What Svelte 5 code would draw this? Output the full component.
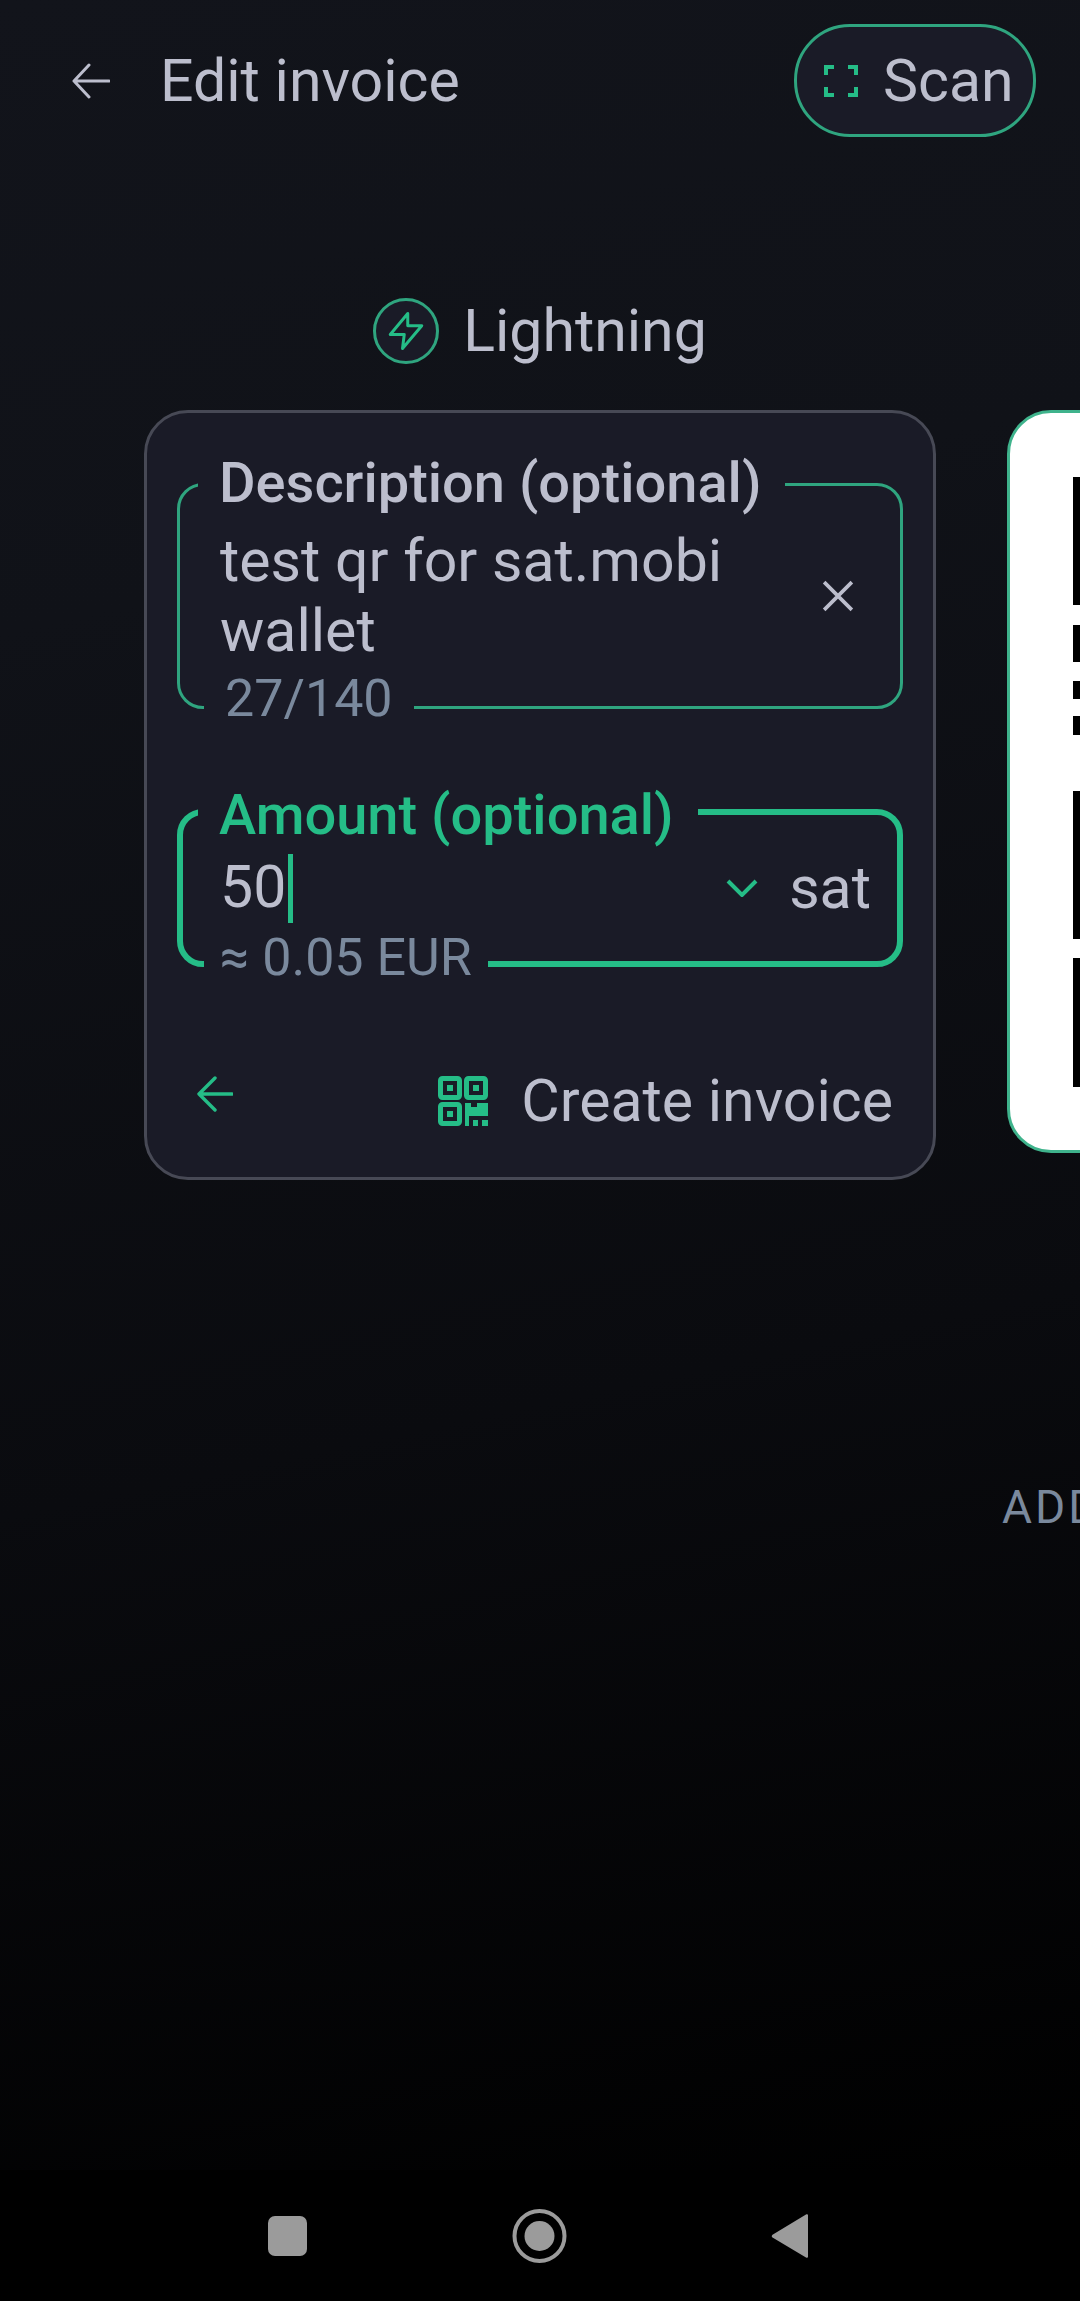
<script>
	// black stripes of the QR code that peek in at the right edge
	const qrBars = [
		{ top: 64, height: 128 },
		{ top: 20, height: 37 },
		{ top: 19, height: 18 },
		{ top: 17, height: 19 },
		{ top: 56, height: 148 },
		{ top: 19, height: 129 }
	];
</script>

<div class="screen">
	<header class="topbar">
		<div class="title">
			<svg class="back" viewBox="0 0 38 36" fill="none" stroke="currentColor" stroke-width="3" stroke-linecap="round" stroke-linejoin="round">
				<path d="M37 18H2M17 2 2 18l15 16" />
			</svg>
			<span>Edit invoice</span>
		</div>
		<button class="scan">
			<svg viewBox="0 0 34 32" fill="none" stroke="currentColor" stroke-width="4">
				<path d="M2 10V2h8M24 2h8v8M32 22v8h-8M10 30H2v-8" />
			</svg>
			<span>Scan</span>
		</button>
	</header>

	<div class="network">
		<span class="bolt">
			<svg viewBox="0 0 24 24" fill="none" stroke="currentColor" stroke-width="1.700" stroke-linejoin="round">
				<path d="M13 2 3 14h8l-1 8 11-13h-8z" />
			</svg>
		</span>
		<span>Lightning</span>
	</div>

	<main class="carousel">
		<section class="card">
			<div class="field">
				<span class="legend">Description (optional)</span>
				<div class="value">
					<p>test qr for sat.mobi<br />wallet</p>
					<svg class="clear" viewBox="0 0 30 30" fill="none" stroke="currentColor" stroke-width="3.4">
						<path d="M2 2l26 26M28 2 2 28" />
					</svg>
				</div>
				<span class="hint">27/140</span>
			</div>

			<div class="field active">
				<span class="legend">Amount (optional)</span>
				<div class="value amount">
					<p>50<i class="caret"></i></p>
					<svg class="chevron" viewBox="0 0 32 18" fill="none" stroke="currentColor" stroke-width="4">
						<path d="M2 2l14 14L30 2" />
					</svg>
					<span class="unit">sat</span>
				</div>
				<span class="hint">≈ 0.05 EUR</span>
			</div>

			<div class="actions">
				<svg class="back-green" viewBox="0 0 36 36" fill="none" stroke="currentColor" stroke-width="3.4" stroke-linecap="round" stroke-linejoin="round">
					<path d="M35 18H2M18 2 2 18l16 16" />
				</svg>
				<div class="create">
					<svg viewBox="0 0 50 50" fill="none" stroke="currentColor" stroke-width="5">
						<rect x="2.500" y="2.500" width="19" height="19" rx="2" />
						<rect x="28.500" y="2.500" width="19" height="19" rx="2" />
						<rect x="2.500" y="28.500" width="19" height="19" rx="2" />
						<g fill="currentColor" stroke="none">
							<rect x="9" y="9" width="6" height="6" />
							<rect x="35" y="9" width="6" height="6" />
							<rect x="9" y="35" width="6" height="6" />
							<path d="M27 27h6v4h6v-4h11v13H31v10h-4z" />
							<rect x="35" y="44" width="5" height="6" />
							<rect x="44" y="44" width="6" height="6" />
						</g>
					</svg>
					<span>Create invoice</span>
				</div>
			</div>
		</section>

		<section class="side">
			<div class="qr">
				{#each qrBars as bar}
					<i style="margin-top: {bar.top}px; height: {bar.height}px"></i>
				{/each}
			</div>
			<span class="add">ADD</span>
		</section>
	</main>

	<nav class="navbar">
		<svg viewBox="0 0 540 46" fill="#9b9b9b">
			<rect x="0" y="3" width="39" height="40" rx="7" />
			<circle cx="271.500" cy="23" r="25" fill="none" stroke="#9b9b9b" stroke-width="4" />
			<circle cx="271.500" cy="23" r="15" />
			<path d="M538 1.500c1-.7 2-.2 2 1v41c0 1.200-1 1.700-2 1L504.500 24.500c-1-.8-1-2 0-2.800z" />
		</svg>
	</nav>
</div>

<style>
	:global(body) {
		margin: 0;
		background: #000;
	}

	.screen {
		width: 1080px;
		height: 2301px;
		overflow: hidden;
		display: flex;
		flex-direction: column;
		background: linear-gradient(168deg, #12141b 0%, #101218 25%, #0a0b0f 60%, #000 95%);
		color: #bcbecd;
		font-family: Roboto, "Noto Sans", sans-serif;
		font-size: 59px;
	}

	.topbar {
		display: flex;
		justify-content: space-between;
		align-items: center;
		padding: 24px 44px 0 72px;
	}

	.title {
		display: flex;
		align-items: center;
		gap: 50px;
	}

	.back {
		width: 38px;
		height: 36px;
	}

	.scan {
		display: flex;
		align-items: center;
		gap: 25px;
		box-sizing: border-box;
		width: 242px;
		height: 113px;
		padding: 0 0 0 27px;
		background: #1a1b27;
		border: 3px solid #2fa57f;
		border-radius: 56px;
		color: inherit;
		font: inherit;
	}

	.scan svg {
		width: 34px;
		height: 32px;
		color: #25bd87;
	}

	.network {
		display: flex;
		justify-content: center;
		align-items: center;
		gap: 24px;
		height: 65px;
		margin-top: 161px;
	}

	.bolt {
		display: flex;
		align-items: center;
		justify-content: center;
		box-sizing: border-box;
		width: 66px;
		height: 66px;
		background: #1a1b27;
		border: 3px solid #2fa57f;
		border-radius: 50%;
		color: #25bd87;
	}

	.bolt svg {
		width: 42px;
		height: 42px;
	}

	.carousel {
		display: flex;
		align-items: flex-start;
		gap: 71px;
		margin-top: 47px;
		padding-left: 144px;
	}

	.card {
		flex: none;
		box-sizing: border-box;
		width: 792px;
		height: 770px;
		padding: 70px 30px 0;
		background: #1a1b27;
		border: 3px solid #474955;
		border-radius: 44px;
	}

	.field {
		position: relative;
		box-sizing: border-box;
		height: 226px;
		border: 3px solid #2fa57f;
		border-radius: 26px;
	}

	.field.active {
		height: 158px;
		margin-top: 100px;
		border: 6px solid #25bd87;
	}

	.legend,
	.hint {
		position: absolute;
		left: 18px;
		padding: 0 24px 0 21px;
		background: #1a1b27;
		white-space: nowrap;
	}

	.legend {
		top: -33px;
		font-size: 56px;
		font-weight: 500;
		line-height: 60px;
	}

	.active .legend {
		top: -30px;
		left: 15px;
		color: #25bd87;
	}

	.hint {
		bottom: -19px;
		left: 24px;
		padding-right: 21px;
		color: #7a899d;
		font-size: 52px;
		line-height: 52px;
	}

	.active .hint {
		bottom: -23px;
		left: 21px;
		padding-left: 16px;
		padding-right: 16px;
	}

	.value {
		display: flex;
		align-items: center;
		justify-content: space-between;
		padding: 40px 46px 0 40px;
	}

	.value p {
		margin: 0;
		line-height: 70px;
	}

	.clear {
		width: 32px;
		height: 32px;
	}

	.amount {
		padding: 37px 26px 0 37px;
	}

	.caret {
		display: inline-block;
		width: 5px;
		height: 69px;
		margin-left: 2px;
		background: #25bd87;
		vertical-align: -16px;
	}

	.chevron {
		width: 32px;
		height: 18px;
		margin-left: auto;
		color: #25bd87;
	}

	.unit {
		margin-left: 31px;
	}

	.actions {
		display: flex;
		justify-content: space-between;
		align-items: center;
		margin-top: 99px;
		padding: 0 10px 0 20px;
	}

	.back-green {
		width: 36px;
		height: 36px;
		margin-top: -14px;
		color: #25bd87;
	}

	.create {
		display: flex;
		align-items: center;
		gap: 33px;
	}

	.create svg {
		width: 50px;
		height: 50px;
		color: #25bd87;
	}

	.side {
		flex: none;
		display: flex;
		flex-direction: column;
	}

	.qr {
		box-sizing: border-box;
		width: 800px;
		height: 743px;
		padding-left: 63px;
		background: #fff;
		border: 3px solid #3fb38c;
		border-radius: 44px;
	}

	.qr i {
		display: block;
		width: 60px;
		background: #000;
	}

	.add {
		margin-top: 327px;
		margin-left: -5px;
		color: #7a899d;
		font-size: 46px;
		letter-spacing: 3px;
	}

	.navbar {
		margin-top: auto;
		box-sizing: border-box;
		height: 131px;
		padding: 43px 0 0 268px;
		background: #000;
	}

	.navbar svg {
		display: block;
		width: 540px;
		height: 46px;
		overflow: visible;
	}
</style>
